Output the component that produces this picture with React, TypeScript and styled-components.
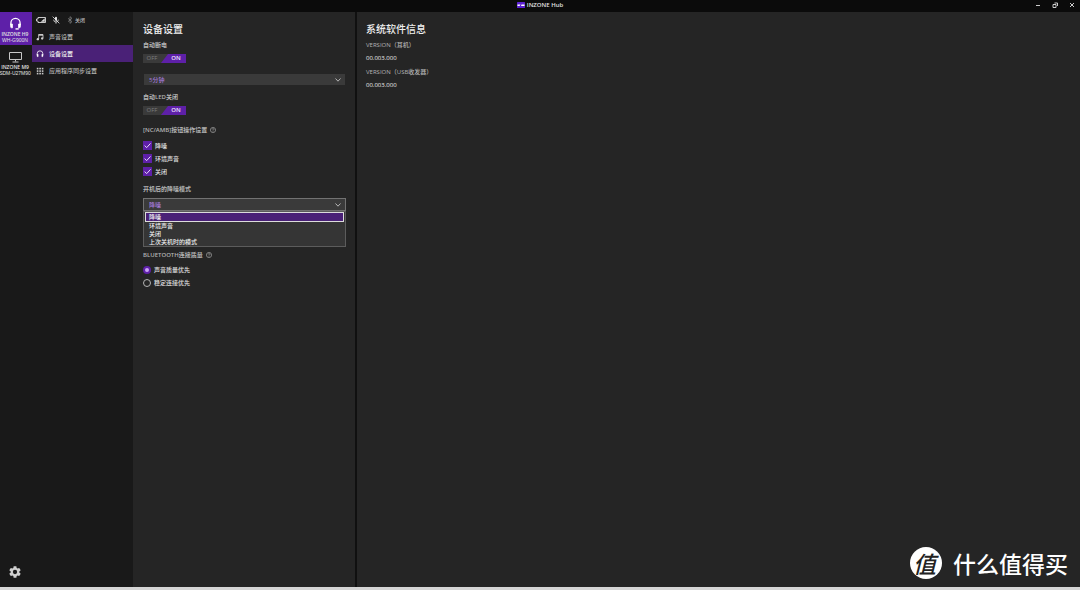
import React, { useState } from "react";
import styled, { createGlobalStyle, css } from "styled-components";

const GlobalStyle = createGlobalStyle`
  * { box-sizing: border-box; }
  body {
    margin: 0;
    background: #252525;
    color: #e2e2e2;
    font-family: "Open Sans", "Noto Sans CJK SC", sans-serif;
    font-size: 6px;
    line-height: 8px;
    font-weight: 500;
  }
  button, input, select { font: inherit; color: inherit; margin: 0; }
  button { border: 0; padding: 0; background: none; cursor: pointer; }
  h1, h2, p, ul, dl, dd, fieldset { margin: 0; padding: 0; border: 0; }
`;

const Window = styled.div`
  display: grid;
  grid-template-rows: 12px 1fr 3px;
  min-height: 100vh;
`;

const TitleBar = styled.header`
  display: grid;
  grid-template-columns: 1fr auto 1fr;
  align-items: center;
  background: #0b0b0b;
  padding-bottom: 2px;
`;

const Brand = styled.div`
  grid-column: 2;
  display: flex;
  align-items: center;
  gap: 2px;
  font-weight: 600;
`;

const WindowButtons = styled.div`
  display: flex;
  justify-content: flex-end;
  gap: 9px;
  padding-right: 4px;
`;

const WindowButton = styled.button`
  display: flex;
  width: 8px;
  height: 8px;
  align-items: center;
  justify-content: center;
`;

const Body = styled.div`
  display: grid;
  grid-template-columns: 32px 101px 224px 1fr;
`;

const BottomEdge = styled.div`
  background: #d6d6d6;
`;

const Rail = styled.nav`
  display: flex;
  flex-direction: column;
  background: #191919;
`;

const Device = styled.button<{ $active?: boolean }>`
  display: flex;
  flex-direction: column;
  align-items: center;
  height: 33px;
  padding: 5px 2px 0 0;
  background: ${(p) => (p.$active ? "#5e20a8" : "transparent")};
  white-space: nowrap;
  svg { margin-bottom: 1px; }
`;

const DeviceName = styled.span`
  font-size: 5px;
  font-weight: 600;
  line-height: 6px;
`;

const DeviceModel = styled.span`
  font-family: "Liberation Sans", sans-serif;
  font-size: 5px;
  line-height: 6px;
`;

const GearButton = styled.button`
  display: flex;
  margin: auto 0 9px 9px;
  width: 12px;
  height: 12px;
`;

const Menu = styled.nav`
  background: #191919;
`;

const StatusRow = styled.div`
  display: flex;
  align-items: center;
  gap: 6px;
  height: 16px;
  padding-left: 4px;
  font-size: 5px;
  color: #bdbdbd;
`;

const StatusItem = styled.span`
  display: flex;
  align-items: center;
  gap: 1px;
`;

const MenuLink = styled.a<{ $active?: boolean }>`
  display: flex;
  align-items: center;
  gap: 5px;
  height: 17px;
  padding-left: 4px;
  color: ${(p) => (p.$active ? "#f0f0f0" : "#b8b8b8")};
  background: ${(p) => (p.$active ? "#4a2177" : "transparent")};
  text-decoration: none;
`;

const Panel = styled.main`
  padding: 10px 9px 0 10px;
  background: #252525;
  border-right: 2px solid #101010;
`;

const InfoPanel = styled.aside`
  position: relative;
  padding: 10px 9px;
  background: #252525;
`;

const Title = styled.h1`
  font-size: 10px;
  line-height: 14px;
  font-weight: 500;
  color: #f0f0f0;
  margin-bottom: 5px;
`;

const labelText = css`
  display: flex;
  align-items: center;
  gap: 3px;
  height: 8px;
  padding: 0;
  color: #b4b4b4;
  font-weight: 600;
`;

const Section = styled.section<{ $gap: number }>`
  margin-bottom: ${(p) => p.$gap}px;
`;

const Label = styled.label`
  ${labelText}
  margin-bottom: 5px;
`;

const Legend = styled.legend<{ $gap: number }>`
  ${labelText}
  margin-bottom: ${(p) => p.$gap}px;
`;

const Group = styled.fieldset<{ $gap: number }>`
  margin-bottom: ${(p) => p.$gap}px;
`;

const Switch = styled.button`
  display: flex;
  width: 43px;
  height: 9px;
  background: #3a3a3a;
`;

const SwitchOff = styled.span`
  width: 18px;
  line-height: 9px;
  color: #7c7c7c;
`;

const SwitchOn = styled.span`
  flex: 1;
  line-height: 9px;
  padding-left: 5px;
  font-weight: 600;
  color: #f2eaff;
  background: #5e20a8;
  clip-path: polygon(7px 0, 100% 0, 100% 100%, 0 100%);
`;

const SelectBox = styled.div<{ $open?: boolean }>`
  position: relative;
  display: flex;
  align-items: center;
  height: 13px;
  background: #3a3a3a;
  border: 1px solid ${(p) => (p.$open ? "#727272" : "#252525")};
  svg { position: absolute; right: 4px; pointer-events: none; }
`;

const Select = styled.select`
  flex: 1;
  height: 11px;
  border: 0;
  padding: 0 5px;
  appearance: none;
  background: transparent;
  color: #a67bdc;
  outline: none;
`;

const Options = styled.ul`
  position: absolute;
  z-index: 1;
  top: 12px;
  left: -1px;
  right: -1px;
  padding: 0 1px;
  list-style: none;
  background: #353535;
  border: 1px solid #5c5c5c;
`;

const Option = styled.li<{ $selected?: boolean }>`
  display: flex;
  align-items: center;
  height: ${(p) => (p.$selected ? 10 : 8)}px;
  padding-left: ${(p) => (p.$selected ? 3 : 4)}px;
  color: #f0f0f0;
  border: ${(p) => (p.$selected ? "1px solid #dcdcdc" : "0")};
  background: ${(p) => (p.$selected ? "#4a2177" : "transparent")};
`;

const Choice = styled.label`
  display: flex;
  align-items: center;
  gap: 3px;
  height: 9px;
  margin-bottom: 4px;
`;

const CheckInput = styled.input`
  appearance: none;
  width: 9px;
  height: 9px;
  background: transparent;
  &:checked { background: #5e20a8; }
`;

const CheckBoxWrap = styled.span`
  display: grid;
  background: #3a3a3a;
  > * { grid-area: 1 / 1; }
  svg { pointer-events: none; z-index: 1; }
`;

const RadioInput = styled.input`
  appearance: none;
  width: 8px;
  height: 8px;
  border: 1px solid #b4b4b4;
  border-radius: 50%;
  &:checked {
    border: 2px solid #5e20a8;
    background: #c9a4f5;
  }
`;

const InfoList = styled.dl`
  dt { height: 8px; margin-bottom: 5px; color: #b4b4b4; }
  dd { height: 8px; margin-bottom: 6px; color: #f0f0f0; }
`;

const Watermark = styled.div`
  position: absolute;
  right: 12px;
  bottom: 8px;
  display: flex;
  align-items: center;
  gap: 11px;
  color: #fff;
  font-family: "Noto Sans CJK SC", sans-serif;
  font-size: 23px;
  line-height: 32px;
  font-weight: 500;
  white-space: nowrap;
`;

const Seal = styled.span`
  display: flex;
  align-items: center;
  justify-content: center;
  width: 32px;
  height: 32px;
  padding-right: 3px;
  border-radius: 50%;
  background: #fff;
  color: #222;
  font-style: italic;
`;

const HeadsetIcon = ({ size }: { size: number }) => (
  <svg width={size} height={size} viewBox="0 0 24 24" fill="none" stroke="#fff" strokeWidth="2.4" aria-hidden="true">
    <path d="M3.5 15V11a8.5 8.5 0 0 1 17 0v4" />
    <path d="M3 13h3.4v7H5a2 2 0 0 1-2-2zM21 13h-3.4v7H19a2 2 0 0 0 2-2z" fill="#fff" strokeWidth="1.4" />
    {size > 10 && <path d="M18 22h-6" strokeWidth="2.6" />}
  </svg>
);

const MonitorIcon = () => (
  <svg width="13" height="13" viewBox="0 0 13 13" fill="none" stroke="#c8c8c8" aria-hidden="true">
    <path d="M.5 2.5h12v7H.5zM6.5 9.5v2M3.5 12h6" />
  </svg>
);

const ChevronIcon = () => (
  <svg width="6" height="4" viewBox="0 0 6 4" fill="none" stroke="#c4c4c4" strokeWidth=".9" aria-hidden="true">
    <path d="M.5.5 3 3.2 5.5.5" />
  </svg>
);

const HelpIcon = () => (
  <svg width="6" height="6" viewBox="0 0 12 12" fill="none" stroke="#a8a8a8" strokeWidth="1.3" aria-hidden="true">
    <circle cx="6" cy="6" r="5.2" />
    <path d="M4.3 4.9c0-2.5 3.5-2.3 3.5-.2 0 1.2-1.8 1.2-1.8 2.5M6 8.3v1.3" />
  </svg>
);

const Check = () => (
  <svg width="9" height="9" viewBox="0 0 9 9" fill="none" stroke="#e6d8fa" aria-hidden="true">
    <path d="M1.6 4.6 3.7 6.6 7.5 2.4" />
  </svg>
);

const NoteIcon = () => (
  <svg width="8" height="8" viewBox="0 0 24 24" aria-hidden="true">
    <path d="M8 18V4.5h13V16" fill="none" stroke="#d4d4d4" strokeWidth="2.4" />
    <path d="M8 4h13v4H8z" fill="#d4d4d4" />
    <circle cx="5.5" cy="18.5" r="3.5" fill="#d4d4d4" />
    <circle cx="18.5" cy="16.5" r="3.5" fill="#d4d4d4" />
  </svg>
);

const GridIcon = () => (
  <svg width="8" height="8" viewBox="0 0 8 8" fill="#c8c8c8" aria-hidden="true">
    {[1, 3.5, 6].map((y) => [1, 3.5, 6].map((x) => <rect key={`${x}-${y}`} x={x - 0.2} y={y - 0.2} width="1.6" height="1.6" />))}
  </svg>
);

const BatteryIcon = () => (
  <svg width="10" height="8" viewBox="0 0 20 16" aria-hidden="true">
    <path d="M4 3h15v10H4V10H1V6h3z" fill="none" stroke="#dcdcdc" strokeWidth="1.8" />
    <path d="M17.5 4.5v7H9.5z" fill="#dcdcdc" />
  </svg>
);

const MicOffIcon = () => (
  <svg width="8" height="8" viewBox="0 0 24 24" fill="none" stroke="#e6e6e6" strokeWidth="2.4" aria-hidden="true">
    <rect x="9" y="2" width="6" height="12" rx="3" fill="#e6e6e6" stroke="none" />
    <path d="M5 11a7 7 0 0 0 14 0M12 18v5M2 2l20 20" />
  </svg>
);

const BluetoothIcon = () => (
  <svg width="8" height="8" viewBox="0 0 24 24" fill="none" stroke="#8c8c8c" strokeWidth="2" aria-hidden="true">
    <path d="m6 7 12 10-6 5V2l6 5L6 17" />
  </svg>
);

const GearIcon = () => (
  <svg width="12" height="12" viewBox="2 2 20 20" fill="#d0d0d0" aria-hidden="true">
    <path d="M19.14 12.94c.04-.3.06-.61.06-.94 0-.32-.02-.64-.07-.94l2.03-1.58a.49.49 0 0 0 .12-.61l-1.92-3.32a.49.49 0 0 0-.59-.22l-2.39.96c-.5-.38-1.03-.7-1.62-.94l-.36-2.54a.48.48 0 0 0-.48-.41h-3.84a.47.47 0 0 0-.47.41l-.36 2.54c-.59.24-1.13.57-1.62.94l-2.39-.96a.48.48 0 0 0-.59.22L2.74 8.87a.47.47 0 0 0 .12.61l2.03 1.58c-.05.3-.09.63-.09.94s.02.64.07.94l-2.03 1.58a.49.49 0 0 0-.12.61l1.92 3.32c.12.22.37.29.59.22l2.39-.96c.5.38 1.03.7 1.62.94l.36 2.54c.05.24.24.41.48.41h3.84c.24 0 .44-.17.47-.41l.36-2.54c.59-.24 1.13-.56 1.62-.94l2.39.96c.22.08.47 0 .59-.22l1.92-3.32a.47.47 0 0 0-.12-.61zM12 15.6A3.6 3.6 0 1 1 12 8.4a3.6 3.6 0 0 1 0 7.2z" />
  </svg>
);

const LogoIcon = () => (
  <svg width="8" height="6" viewBox="0 0 16 12" aria-hidden="true">
    <rect width="16" height="12" rx="1" fill="#5a1fd0" />
    <path d="M1 5h6L5 8H1zM9 5h6v3H8z" fill="#fff" />
  </svg>
);

const Toggle = ({ id }: { id: string }) => {
  const [on, setOn] = useState(true);
  return (
    <Switch id={id} type="button" role="switch" aria-checked={on} onClick={() => setOn(!on)}>
      <SwitchOff>OFF</SwitchOff>
      <SwitchOn>ON</SwitchOn>
    </Switch>
  );
};

const CheckChoice = ({ text }: { text: string }) => (
  <Choice>
    <CheckBoxWrap>
      <CheckInput type="checkbox" defaultChecked />
      <Check />
    </CheckBoxWrap>
    {text}
  </Choice>
);

const modes = ["降噪", "环境声音", "关闭", "上次关机时的模式"];

export default function App() {
  return (
    <>
      <GlobalStyle />
      <Window>
        <TitleBar>
          <Brand>
            <LogoIcon />
            INZONE Hub
          </Brand>
          <WindowButtons>
            <WindowButton aria-label="最小化">
              <svg width="6" height="6" viewBox="0 0 6 6" stroke="#ccc"><path d="M1 3.5h4" /></svg>
            </WindowButton>
            <WindowButton aria-label="还原">
              <svg width="6" height="6" viewBox="0 0 6 6" fill="none" stroke="#ccc"><path d="M1 2.500h3v3H1zM2.500 1h3v3" /></svg>
            </WindowButton>
            <WindowButton aria-label="关闭窗口">
              <svg width="6" height="6" viewBox="0 0 6 6" stroke="#ccc"><path d="m1 1 4 4M5 1 1 5" /></svg>
            </WindowButton>
          </WindowButtons>
        </TitleBar>

        <Body>
          <Rail aria-label="设备">
            <Device $active>
              <HeadsetIcon size={13} />
              <DeviceName>INZONE H9</DeviceName>
              <DeviceModel>WH-G900N</DeviceModel>
            </Device>
            <Device>
              <MonitorIcon />
              <DeviceName>INZONE M9</DeviceName>
              <DeviceModel>SDM-U27M90</DeviceModel>
            </Device>
            <GearButton aria-label="设置">
              <GearIcon />
            </GearButton>
          </Rail>

          <Menu aria-label="设置菜单">
            <StatusRow>
              <BatteryIcon />
              <MicOffIcon />
              <StatusItem>
                <BluetoothIcon />
                关闭
              </StatusItem>
            </StatusRow>
            <MenuLink href="#sound"><NoteIcon />声音设置</MenuLink>
            <MenuLink href="#device" $active><HeadsetIcon size={8} />设备设置</MenuLink>
            <MenuLink href="#apps"><GridIcon />应用程序同步设置</MenuLink>
          </Menu>

          <Panel>
            <Title>设备设置</Title>
            <Section $gap={10}>
              <Label htmlFor="auto-power">自动断电</Label>
              <Toggle id="auto-power" />
            </Section>
            <Section $gap={7}>
              <SelectBox>
                <Select aria-label="自动断电时间" defaultValue="5分钟">
                  <option>5分钟</option>
                </Select>
                <ChevronIcon />
              </SelectBox>
            </Section>
            <Section $gap={11}>
              <Label htmlFor="auto-led">自动LED关闭</Label>
              <Toggle id="auto-led" />
            </Section>
            <Group $gap={5}>
              <Legend $gap={7}>[NC/AMB]按钮操作设置 <HelpIcon /></Legend>
              <CheckChoice text="降噪" />
              <CheckChoice text="环境声音" />
              <CheckChoice text="关闭" />
            </Group>
            <Section $gap={40}>
              <Label htmlFor="startup-mode">开机后的降噪模式</Label>
              <SelectBox $open>
                <Select id="startup-mode" defaultValue={modes[0]}>
                  {modes.map((mode) => <option key={mode}>{mode}</option>)}
                </Select>
                <ChevronIcon />
                <Options role="listbox" aria-label="开机后的降噪模式">
                  {modes.map((mode, i) => (
                    <Option key={mode} role="option" aria-selected={i === 0} $selected={i === 0}>{mode}</Option>
                  ))}
                </Options>
              </SelectBox>
            </Section>
            <Group $gap={0}>
              <Legend $gap={6}>BLUETOOTH连接质量 <HelpIcon /></Legend>
              <Choice><RadioInput type="radio" name="bt" defaultChecked />声音质量优先</Choice>
              <Choice><RadioInput type="radio" name="bt" />稳定连接优先</Choice>
            </Group>
          </Panel>

          <InfoPanel>
            <Title as="h2">系统软件信息</Title>
            <InfoList>
              <dt>VERSION（耳机）</dt>
              <dd>00.003.000</dd>
              <dt>VERSION（USB收发器）</dt>
              <dd>00.003.000</dd>
            </InfoList>
            <Watermark>
              <Seal>值</Seal>
              什么值得买
            </Watermark>
          </InfoPanel>
        </Body>
        <BottomEdge />
      </Window>
    </>
  );
}
